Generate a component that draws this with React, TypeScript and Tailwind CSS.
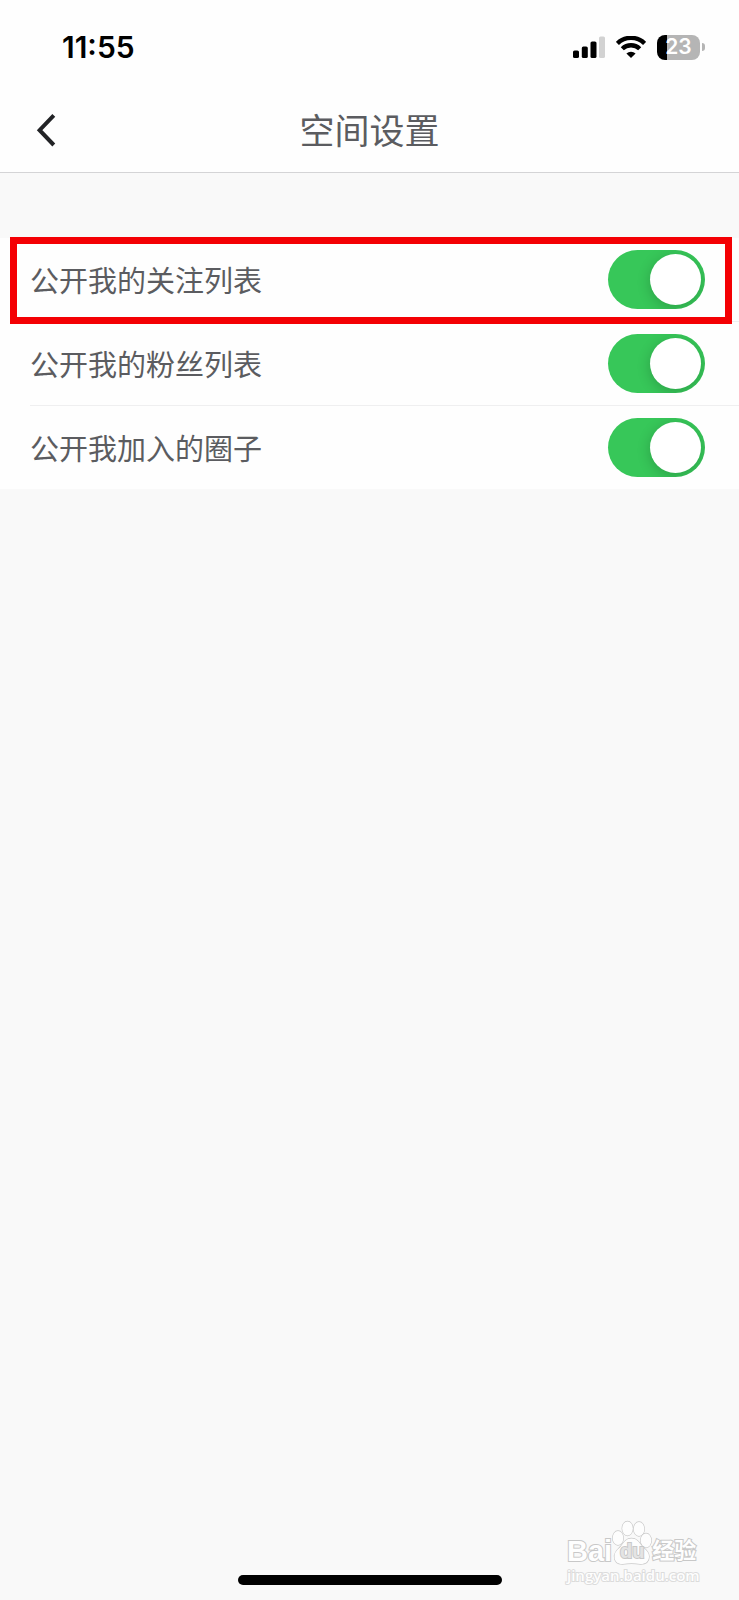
import { useState } from "react";

type Setting = {
  id: string;
  label: string;
  highlighted?: boolean;
};

const SETTINGS: Setting[] = [
  { id: "following", label: "公开我的关注列表", highlighted: true },
  { id: "followers", label: "公开我的粉丝列表" },
  { id: "circles", label: "公开我加入的圈子" },
];

export default function App() {
  const [enabled, setEnabled] = useState<Record<string, boolean>>({
    following: true,
    followers: true,
    circles: true,
  });

  return (
    <div className="relative flex min-h-screen flex-col bg-[#f9f9f9] font-['Noto_Sans_CJK_SC',sans-serif] text-[#5b5c60]">
      <header className="border-b border-[#d4d4d6] bg-[#fefefe]">
        <StatusBar />
        <nav className="grid h-21 grid-cols-[1fr_auto_1fr] items-center px-9">
          <button type="button" aria-label="返回" className="w-6">
            <svg viewBox="0 0 24 34" className="h-[34px] w-6" fill="none" stroke="#222326" strokeWidth="4">
              <path d="M17.8 2.4 3.6 17.2 17.8 32" />
            </svg>
          </button>
          <h1 className="pb-[2px] text-[35px] leading-10 font-normal">空间设置</h1>
        </nav>
      </header>

      <main className="mt-[65px] bg-[#fefefe]">
        <ul>
          {SETTINGS.map((item, i) => (
            <li key={item.id} className="relative">
              <div className="flex h-[83px] items-center justify-between pr-[34px] pl-[30px]">
                <label htmlFor={item.id} className="pb-[2px] text-[29px] leading-10 font-normal">
                  {item.label}
                </label>
                <Toggle
                  id={item.id}
                  checked={enabled[item.id]}
                  onChange={(v) => setEnabled((prev) => ({ ...prev, [item.id]: v }))}
                />
              </div>
              {i < SETTINGS.length - 1 ? <div className="ml-[30px] h-px bg-[#efeff0]" /> : null}
              {item.highlighted ? (
                <div
                  aria-hidden
                  className="pointer-events-none absolute -top-px right-[7px] -bottom-[2px] left-[10px] z-10 border-[7px] border-[#f40004]"
                />
              ) : null}
            </li>
          ))}
        </ul>
      </main>

      <footer className="mt-auto flex justify-center pb-[15px]">
        <div className="h-[10px] w-[264px] rounded-full bg-black" />
      </footer>
      <Watermark />
    </div>
  );
}

function StatusBar() {
  return (
    <div className="flex h-22 items-center justify-between pt-[6px] pr-[34px] pl-[62px] font-['Inter',sans-serif]">
      <span className="text-[30px] leading-8 font-semibold text-black">11:55</span>
      <div className="flex items-center gap-[11px]">
        <svg viewBox="0 0 32 22" className="h-[22px] w-8" aria-hidden>
          <rect x="0" y="14.5" width="6" height="7.5" rx="1.6" />
          <rect x="8.8" y="10.5" width="6" height="11.5" rx="1.6" />
          <rect x="17.5" y="5.5" width="6" height="16.5" rx="1.6" />
          <rect x="26" y="0.5" width="6" height="21.5" rx="1.6" fill="#d2d2d2" />
        </svg>
        <svg viewBox="0 0 30 22" className="h-[22px] w-[30px]" aria-hidden>
          <g fill="none" stroke="#000" strokeWidth="4.4">
            <path d="M1.4 7.4a19.4 19.4 0 0 1 27.2 0" />
            <path d="M6.3 12.8a12.4 12.4 0 0 1 17.4 0" />
          </g>
          <path d="M10.4 17.4a7 7 0 0 1 9.2 0L15 22Z" />
        </svg>
        <div className="flex items-center gap-[2px]">
          <div className="flex h-[25px] w-[43px] items-center justify-center rounded-lg bg-linear-to-r from-black from-[23%] to-[#b5b5b5] to-[23%] text-[21px] leading-6 font-semibold text-white">
            23
          </div>
          <div className="h-2 w-[3px] rounded-r-full bg-[#b5b5b5]" />
        </div>
      </div>
    </div>
  );
}

function Toggle({
  id,
  checked,
  onChange,
}: {
  id: string;
  checked: boolean;
  onChange: (value: boolean) => void;
}) {
  return (
    <input
      id={id}
      type="checkbox"
      role="switch"
      checked={checked}
      onChange={(e) => onChange(e.target.checked)}
      className="flex h-[59px] w-[97px] cursor-pointer appearance-none items-center overflow-hidden rounded-full bg-[#e5e5ea] p-1 before:size-[51px] before:rounded-full before:bg-white before:shadow-[0_3px_14px_rgba(0,0,0,0.2)] before:content-[''] checked:justify-end checked:bg-[#37c759]"
    />
  );
}

function Watermark() {
  return (
    <div className="pointer-events-none absolute right-10 bottom-[15px] w-[132px] font-['Liberation_Sans','Noto_Sans_CJK_SC',sans-serif] font-bold text-[#fefefe] [paint-order:stroke_fill] [-webkit-text-stroke:2px_#c8c8c8]">
      <div className="flex items-end">
        <span className="text-[29px] leading-7">Bai</span>
        <div className="relative flex h-[46px] w-10 items-end justify-center">
          <svg
            viewBox="0 0 40 46"
            className="absolute inset-0 h-[46px] w-10"
            fill="#fdfdfd"
            stroke="#c8c8c8"
            strokeWidth="1.3"
            aria-hidden
          >
            <ellipse cx="6" cy="19" rx="5.3" ry="7" />
            <ellipse cx="15.5" cy="9.5" rx="5.3" ry="7" />
            <ellipse cx="27" cy="10" rx="5.3" ry="7" />
            <ellipse cx="34" cy="21.5" rx="5.3" ry="7" />
            <path d="M19.5 19.5c5 0 7.5 3.5 10 7 3 4 7.5 5.500 7.500 11 0 5-3.500 7.500-8.500 7.500-3 0-6-.7-9-.7s-6 .7-9 .7c-5 0-8-2.500-8-7.500 0-5.500 4-7 7-11 2.500-3.500 5-7 10-7Z" />
          </svg>
          <span className="relative text-xl leading-7 text-[#e4e4e4]">du</span>
        </div>
        <span className="text-[22px] leading-7">经验</span>
      </div>
      <div className="font-['Open_Sans',sans-serif] text-[15px] leading-5 font-semibold [-webkit-text-stroke:2px_#dcdcdc]">
        jingyan.baidu.com
      </div>
    </div>
  );
}
